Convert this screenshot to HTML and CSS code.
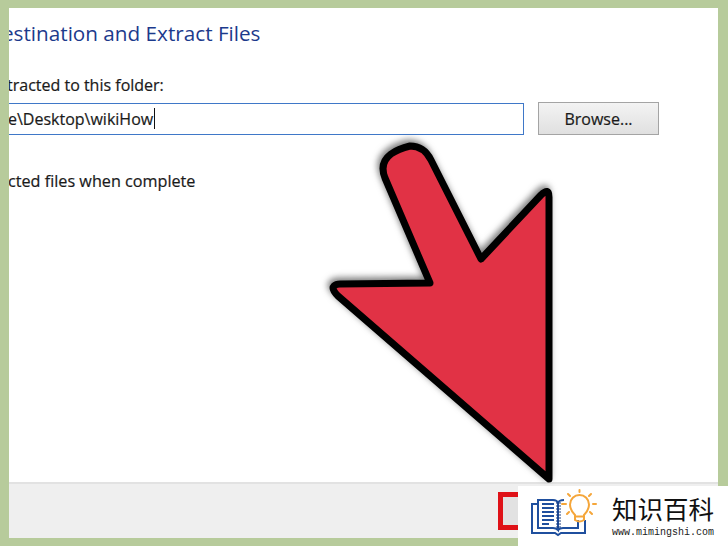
FILE: index.html
```html
<!DOCTYPE html>
<html lang="en">
<head>
<meta charset="utf-8">
<title>Destination and Extract Files</title>
<link rel="stylesheet" href="styles.css">
</head>
<body>
<div class="frame">
  <main class="dialog">
    <section class="content">
      <h1 class="title">estination and Extract Files</h1>
      <p class="label">tracted to this folder:</p>
      <div class="path-row">
        <div class="path-input"><span class="path-text">e\Desktop\wikiHow</span><span class="caret"></span></div>
        <div class="browse">Browse...</div>
      </div>
      <p class="check">cted files when complete</p>
    </section>
    <footer class="footer"><div class="extract"></div></footer>
  </main>
</div>

<svg class="arrow" viewBox="0 0 728 546" aria-hidden="true">
  <path class="arrow-shape" d="M481 259 L541 195 Q549 187 549 197 L549 479 L338 296 Q331 289 334 286 Q336 284 340 284 L430 283 L385 178 Q379 163 391 154 Q398 149 410 146 Q424 146 431 160 Z"/>
</svg>

<aside class="logo">
  <svg class="logo-icon" viewBox="0 0 66 50" aria-hidden="true">
    <g class="book">
      <path d="M7 15 H1 V44 H24 L27 46 L30 44 H54 V31"/>
      <path d="M7 11 H22 Q26 11 27 14 V41 Q25 39 22 39 H7 Z"/>
      <path d="M27 14 Q28 11 33 11 M47 31 V39 H32 Q29 39 27 41"/>
      <path class="lines" d="M11 15 H23 M11 19 H23 M11 23 H23 M11 27 H23 M11 31 H23 M11 35 H18"/>
      <path class="spine" d="M25 14 H30 M25 17 H30 M25 20 H30 M25 23 H30 M25 26 H30 M25 29 H30 M25 32 H30 M25 35 H30 M25 38 H30"/>
    </g>
    <g class="bulb">
      <path d="M44 26 Q39 21 39 15.500 A9.500 9.500 0 0 1 58 15.500 Q58 21 53 26 V31 Q48.500 34 44 31 Z"/>
      <path d="M44 27.500 H53"/>
      <path class="rays" d="M48.500 1 V3 M37 5 L39 7 M60 5 L58 7 M31 15 H35 M62 15 H65 M36 25 L38 23 M61 25 L59 23"/>
    </g>
  </svg>
  <div class="logo-text">
    <div class="logo-name">知识百科</div>
    <div class="logo-url">www.mimingshi.com</div>
  </div>
</aside>
</body>
</html>
```
FILE: styles.css
```css
* { box-sizing: border-box; }
html, body { margin: 0; height: 100%; }
body { width: 728px; height: 546px; overflow: hidden; background: #b7cb9b; font-family: "Open Sans", "Noto Sans", sans-serif; }
.frame { width: 728px; height: 546px; padding: 8px 10px 8px 9px; }
.dialog { width: 709px; height: 530px; background: #fff; overflow: hidden; display: flex; flex-direction: column; }
.content { flex: 1; min-width: 0; }
.title { margin: 11px 0 0 -7px; font-size: 20.7px; line-height: 28px; font-weight: 400; color: #1c3a8c; white-space: nowrap; }
.label { margin: 27px 0 0 -2px; font-size: 16px; line-height: 22px; color: #1a1a1a; white-space: nowrap; -webkit-text-stroke: 0.2px #1a1a1a; }
.path-row { display: flex; align-items: center; margin-top: 6px; height: 33px; }
.path-input { width: 515px; height: 32px; flex: none; border: 1px solid #3f78c8; border-left: 0; display: flex; align-items: center; position: relative; }
.path-text { margin-left: -1px; font-size: 16px; color: #1a1a1a; white-space: nowrap; -webkit-text-stroke: 0.2px #1a1a1a; }
.caret { width: 1px; height: 21px; margin-left: 1px; background: #111; }
.browse { margin-left: 14px; width: 121px; height: 33px; border: 1px solid #a4a4a4; background: linear-gradient(#f3f3f3, #e0e0e0); font-size: 16px; color: #1a1a1a; display: flex; align-items: center; justify-content: center; -webkit-text-stroke: 0.2px #1a1a1a; }
.check { margin: 35px 0 0 -1px; font-size: 16.2px; line-height: 22px; color: #1a1a1a; white-space: nowrap; -webkit-text-stroke: 0.2px #1a1a1a; }
.footer { height: 56px; flex: none; background: #efefef; border-top: 2px solid #e2e2e2; padding: 8px 0 0 489px; }
.extract { width: 60px; height: 38px; border: 5px solid #df1218; background: #e2e2e2; }
.arrow { position: absolute; left: 0; top: 0; width: 728px; height: 546px; pointer-events: none; filter: drop-shadow(-2px -3px 3px rgba(60,60,60,.65)); }
.arrow-shape { fill: #e13245; stroke: #000; stroke-width: 7; stroke-linejoin: round; }
.logo { position: absolute; left: 518px; top: 486px; width: 210px; height: 60px; background: #fff; display: flex; align-items: flex-start; }
.logo-icon { width: 66px; height: 50px; margin: 3px 0 0 13px; overflow: visible; flex: none; }
.book path { fill: none; stroke: #1f4f9e; stroke-width: 2; }
.book .lines { stroke-width: 2; }
.book .spine { stroke-width: 1.2; stroke: #1b3d80; }
.bulb path { fill: none; stroke: #f5a63a; stroke-width: 2; stroke-linecap: round; }
.logo-text { margin: 6px 0 0 15px; width: 104px; }
.logo-name { font-family: "Noto Sans CJK SC", sans-serif; font-size: 25.5px; line-height: 32px; color: #111; white-space: nowrap; }
.logo-url { margin-top: 3px; font-family: "Liberation Mono", monospace; font-size: 10px; line-height: 12px; color: #222; white-space: nowrap; }
```
